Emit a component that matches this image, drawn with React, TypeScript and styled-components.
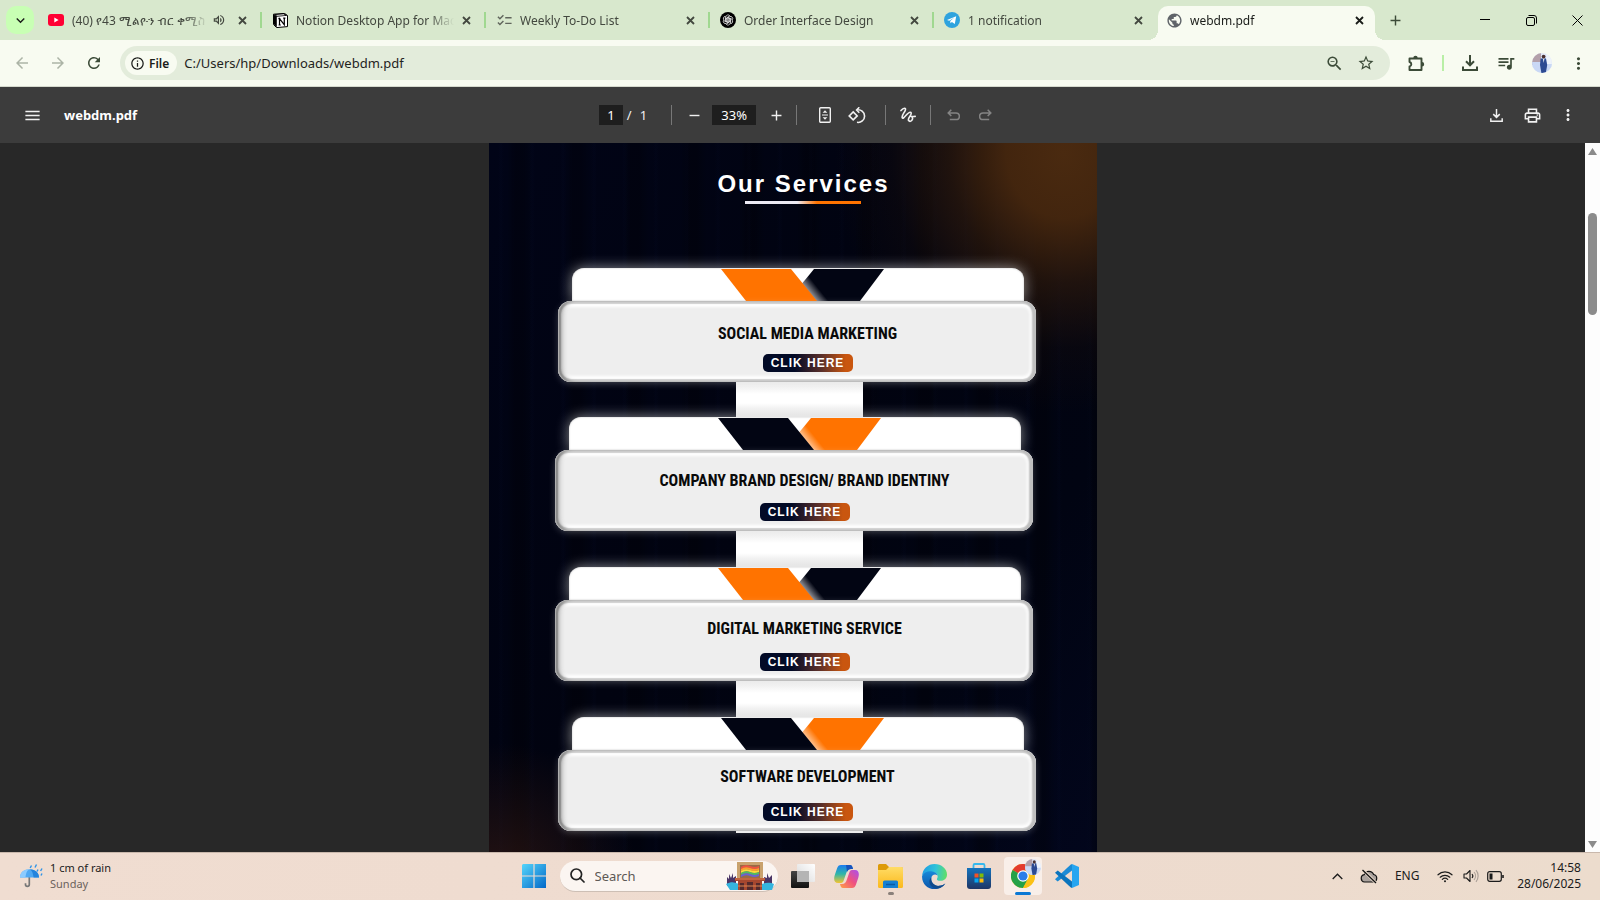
import React, { useId } from 'react';
import styled, { createGlobalStyle, css } from 'styled-components';
import {
  MdArrowBack, MdArrowForward, MdRefresh, MdStarBorder, MdMoreVert, MdMenu,
  MdRemove, MdAdd, MdChecklist, MdPublic, MdQueueMusic, MdOutlinePrint,
  MdOutlineInfo, MdOutlineVolumeUp, MdKeyboardArrowDown, MdOutlineZoomOut,
} from 'react-icons/md';

const ui = '"Noto Sans", "Open Sans", sans-serif';

const GlobalStyle = createGlobalStyle`
  *, *::before, *::after { box-sizing: border-box; }
  body { margin: 0; font-family: ${ui}; background: #282828; }
  button, input { font: inherit; color: inherit; border: 0; margin: 0; padding: 0; background: none; }
  input { outline: 0; min-width: 0; }
  svg { display: block; flex: none; }
`;

const Desktop = styled.div`
  display: flex;
  flex-direction: column;
  height: 100vh;
  overflow: hidden;
`;

/* ---------- browser tab strip ---------- */
const TabStrip = styled.header`
  display: flex;
  align-items: center;
  height: 40px;
  flex: none;
  padding-left: 6px;
  background: #d8e8cd;
`;

const TabSearch = styled.button`
  display: grid;
  place-items: center;
  width: 28px;
  height: 28px;
  flex: none;
  margin-right: 4px;
  border-radius: 10px;
  background: #c8ffb4;
  color: #1a1c19;
`;

const Tabs = styled.div`
  display: flex;
  align-self: stretch;
  flex: 0 1 1337px;
  min-width: 0;
`;

const Tab = styled.div<{ $active?: boolean; $divider?: boolean }>`
  position: relative;
  display: flex;
  align-items: center;
  flex: 1 1 0;
  min-width: 0;
  height: 40px;
  padding: 0 10px;
  font-size: 12px;
  color: #43483f;
  ${p => p.$divider && css`
    border-right: 2px solid transparent;
    border-image: linear-gradient(transparent 12px, #a0d890 12px, #a0d890 28px, transparent 28px) 1;
  `}
  ${p => p.$active && css`
    flex: 0 1 217px;
    height: 34px;
    margin: 6px 0 0 2px;
    padding: 0 8px 6px;
    border-radius: 10px 10px 0 0;
    background: #f8fbf1;
    color: #1a1c19;
    &::before, &::after {
      content: '';
      position: absolute;
      bottom: 0;
      width: 10px;
      height: 10px;
    }
    &::before { left: -10px; background: radial-gradient(circle at 0 0, transparent 10px, #f8fbf1 10px); }
    &::after { right: -10px; background: radial-gradient(circle at 100% 0, transparent 10px, #f8fbf1 10px); }
  `}
`;

const TabTitle = styled.span`
  flex: 1;
  min-width: 0;
  margin: 0 4px 0 8px;
  padding-top: 2px;
  overflow: hidden;
  white-space: nowrap;
  line-height: 20px;
  mask-image: linear-gradient(90deg, #000 calc(100% - 24px), transparent);
`;

const TabIcon = styled.span`
  display: grid;
  place-items: center;
  width: 16px;
  height: 16px;
  flex: none;
`;

const IconButton = styled.button<{ $size?: number; $dim?: boolean }>`
  display: grid;
  place-items: center;
  width: ${p => p.$size ?? 36}px;
  height: ${p => p.$size ?? 36}px;
  flex: none;
  opacity: ${p => (p.$dim ? 0.4 : 1)};
`;

const MuteButton = styled(IconButton)`
  margin-right: 8px;
`;

const WindowControls = styled.div`
  display: flex;
  margin-left: auto;
  color: #000;
`;

const WindowButton = styled.button`
  display: grid;
  place-items: center;
  width: 46px;
  height: 40px;
`;

/* ---------- address bar ---------- */
const AddressRow = styled.div`
  display: flex;
  align-items: center;
  flex: none;
  height: 47px;
  padding: 0 4px;
  background: #f8fbf1;
  border-bottom: 1px solid #d5d9cd;
  color: #3c4b38;
`;

const Omnibox = styled.div`
  display: flex;
  align-items: center;
  flex: 1;
  height: 34px;
  margin: 0 8px;
  padding: 0 8px 0 5px;
  border-radius: 17px;
  background: #e3ecdb;
`;

const FileChip = styled.button`
  display: flex;
  align-items: center;
  gap: 4px;
  height: 24px;
  padding: 0 8px 0 5px;
  border-radius: 12px;
  background: #f8fbf1;
  color: #1a1c19;
  font-size: 12px;
  font-weight: 600;
`;

const UrlInput = styled.input`
  flex: 1;
  margin-left: 7px;
  font-size: 13px;
  color: #1f231d;
`;

const ToolbarDivider = styled.span`
  width: 2px;
  height: 16px;
  margin: 0 8px;
  background: #b9efa6;
`;

/* ---------- PDF viewer ---------- */
const PdfBar = styled.div`
  display: grid;
  grid-template-columns: 1fr auto 1fr;
  align-items: center;
  flex: none;
  height: 56px;
  padding: 0 14px;
  background: #3c3c3c;
  color: #f1f1f1;
  font-size: 13px;
`;

const BarGroup = styled.div<{ $end?: boolean }>`
  display: flex;
  align-items: center;
  justify-content: ${p => (p.$end ? 'flex-end' : 'flex-start')};
`;

const FileName = styled.span`
  margin-left: 14px;
  font-weight: 700;
  color: #fff;
`;

const BarField = styled.input<{ $w: number }>`
  width: ${p => p.$w}px;
  height: 20px;
  text-align: center;
  background: #1e1e1e;
  color: #fff;
`;

const PageCount = styled.span`
  display: flex;
  gap: 8px;
  margin: 0 24px 0 4px;
`;

const BarDivider = styled.span<{ $before?: number; $after: number }>`
  width: 1px;
  height: 20px;
  margin: 0 ${p => p.$after}px 0 ${p => p.$before ?? 0}px;
  background: #777;
`;

const Viewer = styled.main`
  display: flex;
  flex: 1;
  min-height: 0;
  background: #282828;
`;

const Canvas = styled.div`
  display: flex;
  justify-content: center;
  flex: 1;
  overflow: hidden;
`;

const Sheet = styled.article`
  width: 608px;
  padding: 24px 0 0;
  display: flex;
  flex-direction: column;
  align-items: center;
  background:
    radial-gradient(ellipse 230px 260px at 575px 10px, #4a2a10 0, rgba(72, 40, 14, 0.92) 25%, rgba(52, 29, 12, 0.6) 50%, rgba(30, 17, 10, 0.25) 75%, transparent),
    radial-gradient(circle at 10px 740px, rgba(62, 30, 20, 0.6), transparent 140px),
    repeating-linear-gradient(90deg, transparent 0 18px, rgba(0, 0, 0, 0.25) 26px 34px, transparent 44px 58px),
    repeating-linear-gradient(90deg, transparent 0 9px, rgba(10, 20, 60, 0.08) 12px, transparent 15px 31px),
    linear-gradient(125deg, #010417, #010310 45%, #010412 75%, #02061c);
`;

const Heading = styled.h1`
  margin: 0 0 0 22px;
  font: 700 24px/34px "Liberation Sans", sans-serif;
  letter-spacing: 2px;
  color: #fff;
`;

const Rule = styled.span`
  width: 116px;
  height: 3px;
  margin: 0 0 64px 20px;
  background: linear-gradient(90deg, #eceaf4 45%, #ff7300 62%);
`;

const Services = styled.div`
  display: flex;
  flex-direction: column;
  align-self: stretch;
  padding-left: 66px;
`;

const Service = styled.section<{ $indent: number }>`
  width: 478px;
  margin-left: ${p => p.$indent}px;
`;

const Flap = styled.div`
  height: 33px;
  margin: 0 12px 0 14px;
  border-radius: 12px 12px 0 0;
  background: #fff;
  box-shadow: 0 0 14px rgba(255, 255, 255, 0.55), inset 0 0 2px #bbb;
`;

const Panel = styled.div<{ $top: number }>`
  position: relative;
  display: flex;
  flex-direction: column;
  align-items: center;
  justify-content: space-between;
  height: 81px;
  padding: ${p => p.$top}px 0 10px 22px;
  border-radius: 13px;
  background: #eee;
  box-shadow:
    0 2px 9px -2px rgba(255, 255, 255, 0.35),
    inset 1px 0 1px #b4b4b4,
    inset 6px 0 5px -2px rgba(0, 0, 0, 0.45),
    inset -4px 0 2px #bfbfbf,
    inset 0 0 1px 3px #d4d4d4,
    inset 0 0 3px 6px #fff;
`;

const ServiceName = styled.h2`
  margin: 0;
  font: 700 16px/20px "Roboto Condensed", "Liberation Sans Narrow", "DejaVu Sans Condensed", sans-serif;
  text-transform: uppercase;
  white-space: nowrap;
  color: #0a0a0a;
`;

const ClickButton = styled.button`
  width: 90px;
  height: 18px;
  border-radius: 5px;
  background: linear-gradient(90deg, #020a26 35%, #5a2f2a 65%, #c9560f 92%);
  color: #fff;
  font: 700 12px/18px "Liberation Sans", sans-serif;
  letter-spacing: 1px;
`;

const Connector = styled.div<{ $h: number }>`
  width: 127px;
  height: ${p => p.$h}px;
  margin-left: 181px;
  background: linear-gradient(#e8e8e8, #fff 12px, #fff calc(100% - 14px), #dcdcdc);
`;

const ScrollTrack = styled.div`
  display: flex;
  flex-direction: column;
  align-items: center;
  width: 15px;
  padding: 5px 0 4px;
  background: #fdfdfd;
`;

const Thumb = styled.span`
  width: 9px;
  height: 102px;
  margin: 58px 0 auto;
  border-radius: 5px;
  background: #8b8b8b;
`;

/* ---------- taskbar ---------- */
const Taskbar = styled.footer`
  display: grid;
  grid-template-columns: 1fr auto 1fr;
  align-items: center;
  flex: none;
  height: 48px;
  padding-bottom: 1px;
  border-top: 1px solid #c9b8ac;
  background: linear-gradient(90deg, #f0ddd1, #eedbcf 60%, #ecdccd);
  color: #1b1b1b;
  font-size: 12px;
  line-height: 16px;
`;

const Weather = styled.button`
  display: flex;
  align-items: center;
  justify-self: start;
  gap: 7px;
  margin-left: 19px;
  text-align: left;
`;

const Stack = styled.span<{ $right?: boolean }>`
  display: flex;
  flex-direction: column;
  font-size: ${p => (p.$right ? 12 : 11)}px;
  text-align: ${p => (p.$right ? 'right' : 'left')};
`;

const Muted = styled.span`
  color: #6b625c;
`;

const Dock = styled.div`
  display: flex;
  align-items: center;
`;

const SearchPill = styled.label`
  display: flex;
  align-items: center;
  width: 218px;
  height: 31px;
  margin: 0 3px 0 4px;
  padding: 0 4px 0 10px;
  border-radius: 16px;
  background: #fbf5f1;
  border-bottom: 1px solid #cdbfb5;
  gap: 10px;
  font-size: 13px;
`;

const SearchInput = styled.input`
  flex: 1;
  &::placeholder { color: #5e5955; opacity: 1; }
`;

const DockItem = styled.button<{ $active?: boolean; $running?: boolean }>`
  position: relative;
  display: grid;
  place-items: center;
  width: 38px;
  height: 38px;
  margin: 0 3px;
  border-radius: 4px;
  background: ${p => (p.$active ? '#f9efe9' : 'transparent')};
  ${p => (p.$active || p.$running) && css`
    &::after {
      content: '';
      position: absolute;
      bottom: 0;
      width: ${p.$active ? 16 : 6}px;
      height: 3px;
      border-radius: 2px;
      background: ${p.$active ? '#0a78d4' : '#8a807a'};
    }
  `}
`;

const Tray = styled.div`
  display: flex;
  align-items: center;
  justify-self: end;
  margin-right: 19px;
`;

const TrayButton = styled.button<{ $w: number }>`
  display: grid;
  place-items: center;
  width: ${p => p.$w}px;
  height: 32px;
`;

const Clock = styled.button`
  margin-left: 8px;
`;

/* ---------- drawings ---------- */
const CloseIcon = () => (
  <svg width="9" height="9" viewBox="0 0 9 9">
    <path d="M1 1 8 8M8 1 1 8" stroke="currentColor" strokeWidth="1.8" />
  </svg>
);

const NotionLogo = () => (
  <svg width="15" height="15" viewBox="0 0 15 15">
    <path d="M.5 1.2 11.5.4 14.5 2.5V13.6L3.6 14.6.5 11.5Z" fill="#fff" stroke="#000" strokeWidth="1" strokeLinejoin="round" />
    <path d="M.8 1.4 3.8 3.7V14.2L.8 11.3ZM.8 1.2 11.5.4 14.4 2.7 3.8 3.7Z" fill="#000" />
    <path d="M2.6 1.9 10.8 1.3 12 2.2 4.2 2.8Z" fill="#fff" />
    <path d="M6.5 12V5.7L11.3 11.7V5.2M5.4 5.7H7.4M5.6 12H7.8M10.2 5.2H12.4" fill="none" stroke="#000" strokeWidth="1.2" />
  </svg>
);

const OpenAiLogo = () => (
  <svg width="16" height="16" viewBox="0 0 16 16">
    <circle cx="8" cy="8" r="8" fill="#000" />
    <g fill="none" stroke="#ddd" strokeWidth=".8">
      {[0, 60, 120, 180, 240, 300].map(a => (
        <path key={a} transform={`rotate(${a} 8 8)`} d="M8 5.6 10.2 6.8V10.2M5.9 4.8A2.2 2.2 0 0 1 9.9 3.9L7.2 5.4V8" />
      ))}
    </g>
  </svg>
);

const TelegramLogo = () => (
  <svg width="16" height="16" viewBox="0 0 16 16">
    <circle cx="8" cy="8" r="8" fill="#2ea3de" />
    <path d="M3 7.9 12.2 4.3 10.8 12 7.9 9.9 6.5 11.3 6.2 9.1 10.4 5.5 5.2 8.8Z" fill="#fff" />
  </svg>
);

const YoutubeLogo = () => (
  <svg width="16" height="12" viewBox="0 0 16 12">
    <rect width="16" height="12" rx="3" fill="#f03" />
    <path d="M6.3 3.5 10.6 6 6.3 8.5Z" fill="#fff" />
  </svg>
);

const DownloadIcon = ({ size, stroke }: { size: number; stroke: number }) => (
  <svg width={size} height={size} viewBox="0 0 16 16" fill="none" stroke="currentColor" strokeWidth={stroke}>
    <path d="M8 0V10M4 6.3 8 10.3 12 6.3M1 11.5V15H15V11.5" />
  </svg>
);

const ExtensionIcon = () => (
  <svg width="17" height="17" viewBox="0 0 17 17">
    <path d="M1.500 3.500H13.500V15H1.500V11.500A2.300 2.300 0 0 0 1.500 7Z" fill="none" stroke="currentColor" strokeWidth="1.900" strokeLinejoin="round" />
    <path d="M5.300 3A2.200 2.200 0 0 1 9.700 3ZM14 7A2.200 2.200 0 0 1 14 11.400Z" fill="currentColor" />
  </svg>
);

const FitPageIcon = () => (
  <svg width="12" height="16" viewBox="0 0 12 16" fill="none" stroke="currentColor" strokeWidth="1.4">
    <rect x=".7" y=".7" width="10.6" height="14.6" rx="1" />
    <path d="M3 8H9" strokeWidth="1" />
    <path d="M6 3.3 8.4 5.8H3.6ZM6 12.7 8.4 10.2H3.6Z" fill="currentColor" stroke="none" />
  </svg>
);

const RotateIcon = () => (
  <svg width="18" height="17" viewBox="0 0 18 17" fill="none" stroke="currentColor" strokeWidth="1.6">
    <path d="M5.2 4.9 9.2 8.9 5.2 12.9 1.2 8.9Z" />
    <path d="M9 15.3A6.3 6.3 0 1 0 8.8 3M11.3 .3 8.6 3 11.3 5.7" />
  </svg>
);

const DrawIcon = () => (
  <svg width="16" height="16" viewBox="0 0 16 16" fill="none" stroke="currentColor" strokeWidth="1.6" strokeLinecap="round">
    <path d="M1 3.6C3.6.5 6.2.4 5.3 3.2 4.6 5.4 1.4 8.6 2.2 10.6 3.4 13.4 8.3 3.4 10.8 5.4 13 7.5 7 10.7 8.6 13.6 10.3 15.8 13.2 12.8 12.4 10.6 11.4 8.6 8.6 9.6 15.2 9.4" />
  </svg>
);

const UndoIcon = ({ flip }: { flip?: boolean }) => (
  <svg width="13" height="12" viewBox="0 0 13 12" fill="none" stroke="currentColor" strokeWidth="1.5">
    <g transform={flip ? 'matrix(-1 0 0 1 13 0)' : undefined}>
      <path d="M4.3 .8 1.2 3.9 4.3 7M1.2 3.9H9A3.2 3.2 0 0 1 9 10.6H2.8" />
    </g>
  </svg>
);

const Avatar = ({ size }: { size: number }) => {
  const id = useId();
  return (
    <svg width={size} height={size} viewBox="0 0 20 20">
      <clipPath id={id}><circle cx="10" cy="10" r="10" /></clipPath>
      <g clipPath={`url(#${id})`}>
        <rect width="20" height="20" fill="#dfe6f6" />
        <path d="M0 0H9V9L0 12Z" fill="#b3a0aa" />
        <path d="M0 9H20V20H0Z" fill="#c9d8f5" />
        <path d="M14 0H20V11H15Z" fill="#eef3fb" />
        <path d="M8.6 5.5 14 5.4 15.2 12 13.8 20H9.4L8 12Z" fill="#2c4a92" />
        <path d="M11 5.6 11.7 10 12.4 5.6Z" fill="#fff" />
        <circle cx="11.6" cy="3.6" r="1.9" fill="#4a3030" />
      </g>
    </svg>
  );
};

const Chevrons = ({ swap }: { swap?: boolean }) => {
  const id = useId();
  const front = swap ? '#020513' : '#ff7300';
  const back = swap ? '#ff7300' : '#020513';
  return (
    <svg width="452" height="33" viewBox="0 0 452 33">
      <defs>
        <linearGradient id={id} gradientUnits="userSpaceOnUse" x1="233" y1="24" x2="243" y2="16">
          <stop offset="0" stopColor="#fff" stopOpacity=".75" />
          <stop offset="1" stopColor="#fff" stopOpacity="0" />
        </linearGradient>
      </defs>
      <path d="M242 1H312L288 33H216Z" fill={back} />
      <path d="M242 1H312L288 33H216Z" fill={`url(#${id})`} />
      <path d="M149 1H219L245 33H174Z" fill={front} />
    </svg>
  );
};

const Umbrella = () => (
  <svg width="24" height="26" viewBox="0 0 24 26">
    <path d="M10.3 13V21.5A1.9 1.9 0 0 1 6.5 21.5V20.3" fill="none" stroke="#777" strokeWidth="1.7" />
    <path d="M1 14.5C1 3.5 19.5 3.5 20 14.5Z" fill="#4fa8f2" />
    <path d="M6.5 14.5C7 9.5 8.5 7 10.5 6.3 4 6.5 1 10 1 14.5Z" fill="#8ccbff" />
    <path d="M14.6 14.5C14 9.5 12.5 7 10.5 6.3 17 6.5 20 10 20 14.5Z" fill="#2484dd" />
    <path d="M12.5 2.5 11.2 5M17.5 1.5 16 4.5M23 5.5 21.6 8M19 6.5 18 8.5M23 10.5 22 12.5" stroke="#2d93e8" strokeWidth="1.4" />
  </svg>
);

const WindowsLogo = () => (
  <svg width="24" height="24" viewBox="0 0 24 24">
    <linearGradient id="win" x1="0" y1="0" x2="1" y2="1"><stop stopColor="#55d5fb" /><stop offset="1" stopColor="#0268c8" /></linearGradient>
    <path d="M1 0H11.4V11.4H0V1ZM12.6 0H24V11.4H12.6ZM0 12.6H11.4V24H0ZM12.6 12.6H24V24H12.6Z" fill="url(#win)" />
  </svg>
);

const PrideHouse = () => (
  <svg width="48" height="28" viewBox="0 0 48 28">
    <path d="M1 24V15L3 17V12L5 16L7 11V16L10 14V24ZM38 24V15L41 16V11L43 16L46 13V24Z" fill="#4a3566" />
    <path d="M0 22C8 18 12 22 16 24H32C38 20 44 20 48 22L46 28H4Z" fill="#35b5df" />
    <rect x="11" y="0" width="26" height="17" fill="#c9a26d" />
    <rect x="14" y="3" width="20" height="13" fill="#9a6a45" />
    <path d="M15 5Q19 2 24 4T33 4V6Q28 8 24 6T15 7Z" fill="#ee5340" />
    <path d="M15 7Q19 4 24 6T33 6V8Q28 10 24 8T15 9Z" fill="#ff9d2e" />
    <path d="M15 9Q19 6 24 8T33 8V10Q28 12 24 10T15 11Z" fill="#f8dc3c" />
    <path d="M15 11Q19 8 24 10T33 10V12Q28 14 24 12T15 13Z" fill="#4fbc63" />
    <path d="M15 13Q19 10 24 12T33 12V14Q28 16 24 14T15 15Z" fill="#6a62d2" />
    <path d="M9 16H39V19H36V28H12V19H9Z" fill="#a5472f" />
    <path d="M14 21H18V28H14ZM30 21H34V28H30ZM21 20H27V28H21Z" fill="#542a2d" />
    <path d="M9 17H39M12 24H36" stroke="#df8451" strokeWidth="1" />
  </svg>
);

const TaskViewLogo = () => (
  <svg width="24" height="24" viewBox="0 0 24 24">
    <linearGradient id="tv" x2="0" y2="1"><stop stopColor="#444" /><stop offset="1" stopColor="#111" /></linearGradient>
    <linearGradient id="tw" x1="1" y1="0" x2="0" y2="1"><stop stopColor="#fff" /><stop offset="1" stopColor="#d8d8d8" /></linearGradient>
    <rect y="7" width="18" height="17" rx="1" fill="url(#tv)" />
    <rect x="6" width="18" height="18" rx="1" fill="url(#tw)" />
    <rect x="6" y="7" width="12" height="11" fill="#b4b4b4" />
  </svg>
);

const CopilotLogo = () => (
  <svg width="25" height="23" viewBox="0 0 25 23">
    <defs>
      <linearGradient id="cpa" x1="0" y1="0" x2="0" y2="1"><stop stopColor="#1c7cf0" /><stop offset=".5" stopColor="#2fb6a8" /><stop offset="1" stopColor="#f4c430" /></linearGradient>
      <linearGradient id="cpb" x1="1" y1="0" x2="0" y2="1"><stop stopColor="#a94ff0" /><stop offset=".5" stopColor="#f0527e" /><stop offset="1" stopColor="#ffa045" /></linearGradient>
    </defs>
    <path d="M7 0H16C18 0 18.5 2 19 4H17C14 4 13 6 12.3 8L9.5 16C9 17.5 8 18 6 18H4C0 18-.5 14 .8 10L3 3.500C3.800 1 5 0 7 0Z" fill="url(#cpa)" />
    <path d="M18 23H9C7 23 6.500 21 6 19H8C11 19 12 17 12.700 15L15.500 7C16 5.500 17 5 19 5H21C25 5 25.500 9 24.200 13L22 19.500C21.200 22 20 23 18 23Z" fill="url(#cpb)" />
    <path d="M12 0H16C18 0 18.500 2 19 4H17C15 4 14 5 13 7Z" fill="#1753bd" />
  </svg>
);

const FolderLogo = () => (
  <svg width="25" height="24" viewBox="0 0 25 24">
    <linearGradient id="fo" x2="0" y2="1"><stop stopColor="#ffdc66" /><stop offset="1" stopColor="#fbb91c" /></linearGradient>
    <path d="M0 1.500Q0 0 1.500 0H8L11 3H23Q25 3 25 5V10H0Z" fill="#dd9a08" />
    <path d="M0 6H8L11 3H23.500Q25 3 25 4.500V22.500Q25 24 23.500 24H1.500Q0 24 0 22.500Z" fill="url(#fo)" />
    <path d="M5 24V18Q5 16.500 6.500 16.500H18.500Q20 16.500 20 18V24Z" fill="#1580d2" />
    <path d="M8 20.500H17" stroke="#0a5ba6" strokeWidth="1.500" />
  </svg>
);

const EdgeLogo = () => (
  <svg width="25" height="25" viewBox="0 0 25 25">
    <defs>
      <linearGradient id="ea" x1="0" x2="1" y1=".3" y2=".4"><stop stopColor="#1f9ce4" /><stop offset=".55" stopColor="#30c3d8" /><stop offset="1" stopColor="#5fde68" /></linearGradient>
      <linearGradient id="eb" x2="0" y2="1"><stop stopColor="#1688d9" /><stop offset="1" stopColor="#0b56ab" /></linearGradient>
    </defs>
    <path d="M.1 12C.6 4.800 6 0 12.500 0 19.500 0 25 5 25 10.500 25 14.500 22 16.800 18.600 16.800 15.500 16.800 14.500 15.700 15 14.700 16.800 12 15 8.200 10.500 8 5.500 7.700 1.500 10 .1 12Z" fill="url(#ea)" />
    <path d="M.1 12C1.500 9 5 7 9 7.200 12.500 7.400 15 9 15.500 11.500 13 9.500 9.500 11 9.200 14.500 9 19 13 22.500 17.500 21.800 20 21.500 22 20.400 23.300 19.400 21 22.800 17 25 12.500 25 5.500 25-.4 19.500.1 12Z" fill="url(#eb)" />
    <path d="M9.300 13.500C8.500 19 13 22.500 17.500 21.800 20 21.500 22 20.400 23.300 19.400 21.500 22.600 17.500 24.700 14 24.600 7.500 23.500 5.500 16.500 9.300 13.500Z" fill="#114a8b" />
  </svg>
);

const StoreLogo = () => (
  <svg width="24" height="26" viewBox="0 0 24 26">
    <linearGradient id="st" x2="0" y2="1"><stop stopColor="#1473bd" /><stop offset="1" stopColor="#1e3565" /></linearGradient>
    <path d="M6.500 6V2.300Q6.500 1 7.800 1H16.200Q17.500 1 17.500 2.300V6" fill="none" stroke="#35b8ed" strokeWidth="1.800" />
    <path d="M0 5H24V23Q24 26 21 26H3Q0 26 0 23Z" fill="url(#st)" />
    <path d="M7.500 10.500H11.500V14.500H7.500Z" fill="#f35325" /><path d="M12.500 10.500H16.500V14.500H12.500Z" fill="#81bc06" />
    <path d="M7.500 15.500H11.500V19.500H7.500Z" fill="#05a6f0" /><path d="M12.500 15.500H16.500V19.500H12.500Z" fill="#ffba08" />
  </svg>
);

const ChromeLogo = () => (
  <svg width="24" height="24" viewBox="0 0 24 24">
    <circle cx="12" cy="12" r="12" fill="#fbc116" />
    <path d="M12 12 1.600 6A12 12 0 0 1 22.400 6Z" fill="#e33b2e" />
    <path d="M12 12 1.600 6A12 12 0 0 0 12 24L17.200 15Z" fill="#24a148" />
    <path d="M12 6.500H22.600A12 12 0 0 1 12 24L17 14.500Z" fill="#fbc116" />
    <circle cx="12" cy="12" r="5.800" fill="#fff" />
    <circle cx="12" cy="12" r="4.600" fill="#2a7de9" />
  </svg>
);

const ChromeBadge = styled.span`
  position: absolute;
  top: 2px;
  right: 1px;
`;

const VsCodeLogo = () => (
  <svg width="24" height="24" viewBox="0 0 24 24">
    <path d="M17 0 24 3V21L17 24Z" fill="#26a5f0" />
    <path d="M17 0V6.500L2.700 17.600 0 15.200 15.500 .8Z" fill="#1b8bd6" />
    <path d="M17 24V17.500L2.700 6.400 0 8.800 15.500 23.200Z" fill="#0a74bd" />
  </svg>
);

const CloudOff = () => (
  <svg width="18" height="15" viewBox="0 0 18 15">
    <path d="M4.500 13A3.700 3.700 0 0 1 4.200 5.700 5 5 0 0 1 13.600 5.500 3.800 3.800 0 0 1 13.500 13Z" fill="#aaa29d" stroke="#111" strokeWidth="1.200" />
    <path d="M3 1 16 14" stroke="#ecdccd" strokeWidth="3" />
    <path d="M2.500 1 16 14" stroke="#111" strokeWidth="1.300" />
  </svg>
);

const WifiIcon = () => (
  <svg width="16" height="13" viewBox="0 0 16 13" fill="none" stroke="#1b1b1b" strokeWidth="1.200" strokeLinecap="round">
    <path d="M1 4.800A10 10 0 0 1 15 4.800M3.200 7.200A7 7 0 0 1 12.800 7.200M5.300 9.400A4 4 0 0 1 10.700 9.400" />
    <circle cx="8" cy="11.300" r="1" fill="#1b1b1b" stroke="none" />
  </svg>
);

const SpeakerIcon = () => (
  <svg width="16" height="14" viewBox="0 0 16 14" fill="none" stroke="#1b1b1b" strokeWidth="1.100">
    <path d="M1 5H3.500L7 1.500V12.500L3.500 9H1Z" strokeLinejoin="round" />
    <path d="M9 5A3 3 0 0 1 9 9" />
    <path d="M11 3A6 6 0 0 1 11 11M13 1.200A9 9 0 0 1 13 12.800" stroke="#a99e96" />
  </svg>
);

const BatteryIcon = () => (
  <svg width="17" height="11" viewBox="0 0 17 11" fill="none" stroke="#1b1b1b" strokeWidth="1.200">
    <rect x=".7" y=".7" width="13.600" height="9.600" rx="2" />
    <path d="M16 4V7" strokeWidth="1.600" />
    <rect x="2.500" y="2.500" width="3" height="6" fill="#1b1b1b" stroke="none" />
  </svg>
);

/* ---------- data ---------- */
const openTabs = [
  { title: '(40) የ43 ሚልዮን ብር ቀሚስ', icon: <YoutubeLogo />, audio: true },
  { title: 'Notion Desktop App for Mac', icon: <NotionLogo /> },
  { title: 'Weekly To-Do List', icon: <MdChecklist size={17} color="#60655c" /> },
  { title: 'Order Interface Design', icon: <OpenAiLogo /> },
  { title: '1 notification', icon: <TelegramLogo /> },
  { title: 'webdm.pdf', icon: <MdPublic size={17} color="#5f6368" />, active: true },
];

const services = [
  { name: 'Social Media Marketing', indent: 3, top: 23, gap: 35 },
  { name: 'Company Brand Design/ Brand Identiny', indent: 0, top: 21, gap: 36, swap: true },
  { name: 'Digital Marketing Service', indent: 0, top: 19, gap: 36 },
  { name: 'Software Development', indent: 3, top: 17, gap: 2, swap: true },
];

export default function App() {
  return (
    <Desktop>
      <GlobalStyle />
      <TabStrip>
        <TabSearch aria-label="Search tabs"><MdKeyboardArrowDown size={17} /></TabSearch>
        <Tabs role="tablist">
          {openTabs.map((t, i) => (
            <Tab key={t.title} role="tab" aria-selected={!!t.active} $active={t.active} $divider={i < 4}>
              <TabIcon>{t.icon}</TabIcon>
              <TabTitle>{t.title}</TabTitle>
              {t.audio && <MuteButton $size={14} aria-label="Mute tab"><MdOutlineVolumeUp size={14} /></MuteButton>}
              <IconButton $size={16} aria-label="Close tab"><CloseIcon /></IconButton>
            </Tab>
          ))}
        </Tabs>
        <IconButton $size={40} aria-label="New tab"><MdAdd size={17} color="#3c4b38" /></IconButton>
        <WindowControls>
          <WindowButton aria-label="Minimize"><svg width="10" height="10"><path d="M0 4.500H10" stroke="#000" /></svg></WindowButton>
          <WindowButton aria-label="Restore">
            <svg width="11" height="11" fill="none" stroke="#000"><rect x=".5" y="2.500" width="8" height="8" rx="1.500" /><path d="M2.500 .5H8A2.500 2.500 0 0 1 10.500 3V8.500" /></svg>
          </WindowButton>
          <WindowButton aria-label="Close"><svg width="11" height="11"><path d="M.5 .5 10.500 10.500M10.500 .5 .5 10.500" stroke="#000" /></svg></WindowButton>
        </WindowControls>
      </TabStrip>

      <AddressRow>
        <IconButton $dim aria-label="Back"><MdArrowBack size={18} /></IconButton>
        <IconButton $dim aria-label="Forward"><MdArrowForward size={18} /></IconButton>
        <IconButton aria-label="Reload"><MdRefresh size={18} /></IconButton>
        <Omnibox>
          <FileChip><MdOutlineInfo size={15} />File</FileChip>
          <UrlInput aria-label="Address" defaultValue="C:/Users/hp/Downloads/webdm.pdf" />
          <IconButton $size={32} aria-label="Zoom"><MdOutlineZoomOut size={19} /></IconButton>
          <IconButton $size={32} aria-label="Bookmark"><MdStarBorder size={18} /></IconButton>
        </Omnibox>
        <IconButton aria-label="Extensions"><ExtensionIcon /></IconButton>
        <ToolbarDivider />
        <IconButton aria-label="Downloads"><DownloadIcon size={16} stroke={2} /></IconButton>
        <IconButton aria-label="Media"><MdQueueMusic size={20} /></IconButton>
        <IconButton aria-label="Profile"><Avatar size={20} /></IconButton>
        <IconButton aria-label="Menu"><MdMoreVert size={19} /></IconButton>
      </AddressRow>

      <PdfBar>
        <BarGroup>
          <IconButton aria-label="Sidebar"><MdMenu size={19} /></IconButton>
          <FileName>webdm.pdf</FileName>
        </BarGroup>
        <BarGroup>
          <BarField $w={24} aria-label="Page" defaultValue="1" />
          <PageCount><span>/</span><span>1</span></PageCount>
          <BarDivider $after={4} />
          <IconButton aria-label="Zoom out"><MdRemove size={17} /></IconButton>
          <BarField $w={44} aria-label="Zoom level" defaultValue="33%" />
          <IconButton $size={40} aria-label="Zoom in"><MdAdd size={17} /></IconButton>
          <BarDivider $after={12} />
          <IconButton $size={32} aria-label="Fit to page"><FitPageIcon /></IconButton>
          <IconButton $size={32} aria-label="Rotate"><RotateIcon /></IconButton>
          <BarDivider $before={12} $after={6} />
          <IconButton $size={32} aria-label="Draw"><DrawIcon /></IconButton>
          <BarDivider $before={6} $after={6} />
          <IconButton $size={32} $dim aria-label="Undo"><UndoIcon /></IconButton>
          <IconButton $size={32} $dim aria-label="Redo"><UndoIcon flip /></IconButton>
        </BarGroup>
        <BarGroup $end>
          <IconButton aria-label="Download"><DownloadIcon size={13} stroke={1.8} /></IconButton>
          <IconButton aria-label="Print"><MdOutlinePrint size={19} /></IconButton>
          <IconButton aria-label="More"><MdMoreVert size={18} /></IconButton>
        </BarGroup>
      </PdfBar>

      <Viewer>
        <Canvas>
          <Sheet>
            <Heading>Our Services</Heading>
            <Rule />
            <Services>
              {services.map(s => (
                <React.Fragment key={s.name}>
                  <Service $indent={s.indent}>
                    <Flap><Chevrons swap={s.swap} /></Flap>
                    <Panel $top={s.top}>
                      <ServiceName>{s.name}</ServiceName>
                      <ClickButton>CLIK HERE</ClickButton>
                    </Panel>
                  </Service>
                  <Connector $h={s.gap} />
                </React.Fragment>
              ))}
            </Services>
          </Sheet>
        </Canvas>
        <ScrollTrack>
          <svg width="9" height="7"><path d="M4.500 0 9 7H0Z" fill="#8b8b8b" /></svg>
          <Thumb />
          <svg width="9" height="7"><path d="M4.500 7 9 0H0Z" fill="#8b8b8b" /></svg>
        </ScrollTrack>
      </Viewer>

      <Taskbar>
        <Weather>
          <Umbrella />
          <Stack><span>1 cm of rain</span><Muted>Sunday</Muted></Stack>
        </Weather>
        <Dock>
          <DockItem aria-label="Start"><WindowsLogo /></DockItem>
          <SearchPill>
            <svg width="15" height="15" viewBox="0 0 15 15" fill="none" stroke="#222" strokeWidth="1.700"><circle cx="6.300" cy="6.300" r="5.300" /><path d="M10 10 14 14" strokeLinecap="round" /></svg>
            <SearchInput placeholder="Search" aria-label="Search" />
            <PrideHouse />
          </SearchPill>
          <DockItem aria-label="Task view"><TaskViewLogo /></DockItem>
          <DockItem aria-label="Copilot"><CopilotLogo /></DockItem>
          <DockItem $running aria-label="File Explorer"><FolderLogo /></DockItem>
          <DockItem aria-label="Edge"><EdgeLogo /></DockItem>
          <DockItem aria-label="Store"><StoreLogo /></DockItem>
          <DockItem $active aria-label="Chrome"><ChromeLogo /><ChromeBadge><Avatar size={16} /></ChromeBadge></DockItem>
          <DockItem aria-label="VS Code"><VsCodeLogo /></DockItem>
        </Dock>
        <Tray>
          <TrayButton $w={32} aria-label="Hidden icons"><svg width="11" height="7"><path d="M.7 6 5.500 1.200 10.300 6" fill="none" stroke="#1b1b1b" strokeWidth="1.300" /></svg></TrayButton>
          <TrayButton $w={32} aria-label="OneDrive"><CloudOff /></TrayButton>
          <TrayButton $w={44}>ENG</TrayButton>
          <TrayButton $w={32} aria-label="Network"><WifiIcon /></TrayButton>
          <TrayButton $w={20} aria-label="Volume"><SpeakerIcon /></TrayButton>
          <TrayButton $w={28} aria-label="Battery"><BatteryIcon /></TrayButton>
          <Clock><Stack $right><span>14:58</span><span>28/06/2025</span></Stack></Clock>
        </Tray>
      </Taskbar>
    </Desktop>
  );
}
